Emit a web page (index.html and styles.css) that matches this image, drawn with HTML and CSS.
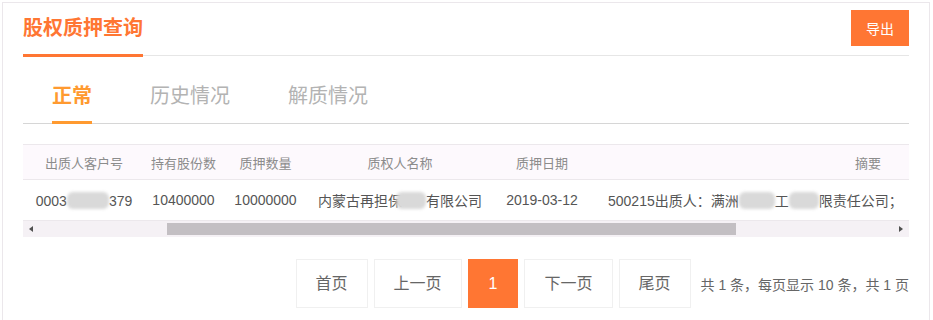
FILE: index.html
```html
<!DOCTYPE html>
<html lang="zh-CN">
<head>
    <meta charset="UTF-8">
    <title>股权质押查询</title>
    <link rel="stylesheet" href="styles.css">
</head>
<body>
    <div class="panel">
        <div class="panel-head">
            <span class="panel-title">股权质押查询</span>
            <button type="button" class="btn-export">导出</button>
        </div>

        <ul class="tabs">
            <li class="tab active">正常</li>
            <li class="tab">历史情况</li>
            <li class="tab">解质情况</li>
        </ul>

        <div class="table-box">
            <table class="data-table">
                <colgroup>
                    <col class="c1"><col class="c2"><col class="c3"><col class="c4"><col class="c5"><col class="c6">
                </colgroup>
                <thead>
                    <tr>
                        <th>出质人客户号</th>
                        <th>持有股份数</th>
                        <th>质押数量</th>
                        <th>质权人名称</th>
                        <th>质押日期</th>
                        <th>摘要</th>
                    </tr>
                </thead>
                <tbody>
                    <tr>
                        <td>0003<span class="mask m1"></span>379</td>
                        <td>10400000</td>
                        <td>10000000</td>
                        <td>内蒙古再担保<span class="mask m2"></span>有限公司</td>
                        <td>2019-03-12</td>
                        <td class="summary">500215出质人：满洲<span class="mask m3"></span>工<span class="mask m4"></span>限责任公司；</td>
                    </tr>
                </tbody>
            </table>
        </div>
        <div class="hscroll">
            <span class="arrow left"></span>
            <div class="track"><div class="thumb"></div></div>
            <span class="arrow right"></span>
        </div>

        <div class="pager">
            <a class="page-btn">首页</a>
            <a class="page-btn">上一页</a>
            <a class="page-btn current">1</a>
            <a class="page-btn">下一页</a>
            <a class="page-btn">尾页</a>
            <span class="page-info">共 1 条，每页显示 10 条，共 1 页</span>
        </div>
    </div>
</body>
</html>
```

FILE: styles.css
```css
body {
    font-family: "Liberation Sans", "Noto Sans CJK SC", sans-serif;
    background-color: #fff;
    margin: 2px;
    padding: 0;
}
.panel {
    width: 928px;
    box-sizing: border-box;
    border: 1px solid #ebe7eb;
    padding: 0 20px 40px;
    background-color: #fff;
}
.panel-head {
    display: flex;
    justify-content: space-between;
    align-items: flex-start;
    border-bottom: 1px solid #e6e6e6;
}
.panel-title {
    padding: 7px 0 8px;
    line-height: 36px;
    font-size: 20px;
    font-weight: bold;
    color: #ff7633;
    border-bottom: 3px solid #ff7633;
    margin-bottom: -2px;
}
.btn-export {
    margin-top: 7px;
    width: 58px;
    height: 36px;
    border: none;
    background-color: #ff7633;
    color: #fff;
    font-family: inherit;
    font-size: 14px;
    padding: 0;
    cursor: pointer;
}
.tabs {
    display: flex;
    list-style: none;
    margin: 20px 0 0;
    padding: 0;
    border-bottom: 1px solid #d6d6d6;
}
.tab {
    margin: 0 29px -1px;
    line-height: 40px;
    padding-bottom: 5px;
    font-size: 20px;
    color: #b3b3b3;
    border-bottom: 3px solid transparent;
    cursor: pointer;
}
.tab.active {
    color: #ff9a30;
    font-weight: bold;
    border-bottom-color: #ff9a30;
}
.table-box {
    margin-top: 20px;
    overflow: hidden;
    border-top: 1px solid #ece8ec;
}
.data-table {
    width: 1120px;
    table-layout: fixed;
    border-collapse: collapse;
    white-space: nowrap;
}
.c1 { width: 122px; }
.c2 { width: 77px; }
.c3 { width: 87px; }
.c4 { width: 182px; }
.c5 { width: 102px; }
.c6 { width: 550px; }
th, td {
    padding: 0;
    text-align: center;
    border-bottom: 1px solid #ece8ec;
}
th {
    height: 34px;
    font-size: 13px;
    font-weight: normal;
    color: #8c8c8c;
    background-color: #fdf9fd;
}
td {
    height: 40px;
    font-size: 14px;
    color: #555;
}
td.summary {
    text-align: left;
    padding-left: 15px;
}
.mask {
    display: inline-block;
    height: 17px;
    vertical-align: -3px;
    background-color: #d9d9d9;
    border-radius: 6px;
    filter: blur(1.5px);
}
.m1 { width: 42px; }
.m2 { width: 30px; margin-left: -6px; }
.m3 { width: 36px; }
.m4 { width: 30px; }
.hscroll {
    display: flex;
    align-items: center;
    height: 16px;
    background-color: #f5f1f5;
}
.arrow {
    width: 16px;
    height: 16px;
    display: flex;
    align-items: center;
    justify-content: center;
}
.arrow::before {
    content: "";
    border-top: 3.5px solid transparent;
    border-bottom: 3.5px solid transparent;
}
.arrow.left::before {
    border-right: 4px solid #505050;
}
.arrow.right::before {
    border-left: 4px solid #505050;
}
.track {
    flex: 1;
    height: 16px;
    display: flex;
    align-items: center;
}
.thumb {
    margin-left: 128px;
    width: 569px;
    height: 12px;
    background-color: #c3bfc3;
}
.pager {
    display: flex;
    justify-content: flex-end;
    align-items: center;
    gap: 6px;
    margin-top: 22px;
}
.page-btn {
    height: 47px;
    line-height: 47px;
    padding: 0 19px;
    border: 1px solid #f0f0f0;
    font-size: 16px;
    color: #666;
    cursor: pointer;
}
.page-btn.current {
    background-color: #ff7633;
    border-color: #ff7633;
    color: #fff;
    padding: 0 20px;
}
.page-info {
    margin-left: 4px;
    font-size: 14px;
    color: #666;
}
```
